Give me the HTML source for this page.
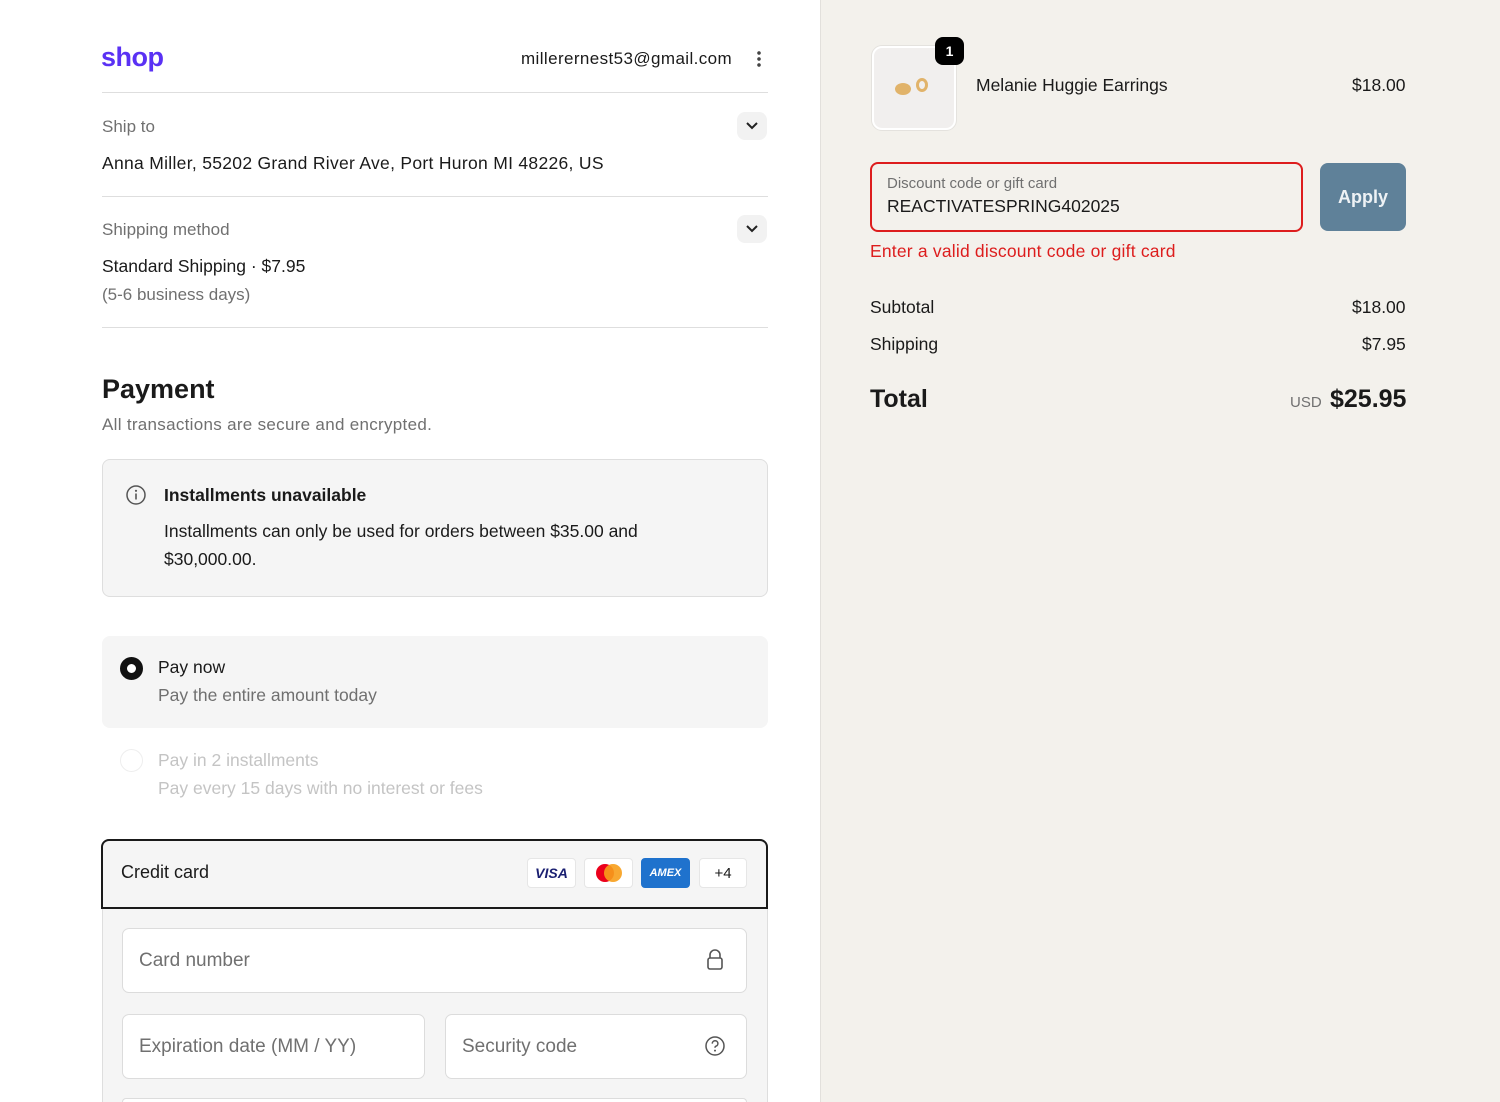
<!DOCTYPE html>
<html style="overflow:hidden;height:1102px"><head><meta charset="utf-8"><style>
*{box-sizing:border-box;margin:0;padding:0}
body{width:1500px;height:1102px;overflow:hidden;font-family:"Liberation Sans",sans-serif;color:#1a1a1a;background:#fff;position:relative}
.a{position:absolute}
.right{position:absolute;left:820px;top:0;width:680px;height:1102px;background:#f3f1ec;border-left:1px solid #e2e0dc}
.hr{position:absolute;left:102px;width:666px;height:1px;background:#dedede}
.g{color:#707070}
.chev{position:absolute;left:737px;width:30px;height:28px;border-radius:8px;background:#f2f2f2}
.box{position:absolute;border-radius:8px}
.inp{position:absolute;background:#fff;border:1px solid #dcdcdc;border-radius:7px;font-size:19px;color:#707070;padding-left:16px;display:flex;align-items:center}
.badge{position:absolute;top:858px;height:30px;border-radius:4px;background:#fff;border:1px solid #e6e6e6;display:flex;align-items:center;justify-content:center;font-size:13px;font-weight:bold}
</style></head><body>
<div class="a" style="left:101px;top:42px;font-size:27px;font-weight:bold;color:#5a31f4;letter-spacing:-0.5px">shop</div>
<div class="a" style="left:521px;top:49px;font-size:17px;letter-spacing:0.4px">millerernest53@gmail.com</div>
<div class="a" style="left:757px;top:50px;width:4px;height:18px;background:radial-gradient(circle,#444 1.6px,transparent 2px) 0 0/4px 6px repeat-y"></div>
<div class="hr" style="top:92px"></div>
<div class="a g" style="left:102px;top:117px;font-size:17px">Ship to</div>
<div class="chev" style="top:112px"><svg width="30" height="28"><path d="M10 11l5 5 5-5" stroke="#222" stroke-width="2" fill="none"/></svg></div>
<div class="a" style="left:102px;top:153px;font-size:17.5px;letter-spacing:0.3px">Anna Miller, 55202 Grand River Ave, Port Huron MI 48226, US</div>
<div class="hr" style="top:196px"></div>
<div class="a g" style="left:102px;top:220px;font-size:17px">Shipping method</div>
<div class="chev" style="top:215px"><svg width="30" height="28"><path d="M10 11l5 5 5-5" stroke="#222" stroke-width="2" fill="none"/></svg></div>
<div class="a" style="left:102px;top:256px;font-size:17.5px">Standard Shipping · $7.95</div>
<div class="a g" style="left:102px;top:285px;font-size:17px">(5-6 business days)</div>
<div class="hr" style="top:327px"></div>
<div class="a" style="left:102px;top:374px;font-size:27px;font-weight:bold">Payment</div>
<div class="a g" style="left:102px;top:415px;font-size:17px;letter-spacing:0.3px">All transactions are secure and encrypted.</div>
<div class="box" style="left:102px;top:459px;width:666px;height:138px;background:#f5f5f5;border:1px solid #dedede"></div>
<svg class="a" style="left:125px;top:484px" width="22" height="22"><circle cx="11" cy="11" r="9" stroke="#555" stroke-width="1.5" fill="none"/><path d="M11 9.5v6" stroke="#555" stroke-width="1.6"/><circle cx="11" cy="6.8" r="1.1" fill="#555"/></svg>
<div class="a" style="left:164px;top:485px;font-size:17.5px;font-weight:bold">Installments unavailable</div>
<div class="a" style="left:164px;top:517px;font-size:17.5px;line-height:28px;width:560px">Installments can only be used for orders between $35.00 and $30,000.00.</div>
<div class="box" style="left:102px;top:636px;width:666px;height:92px;background:#f5f5f5"></div>
<div class="a" style="left:120px;top:657px;width:23px;height:23px;border-radius:50%;border:7px solid #111;background:#fff"></div>
<div class="a" style="left:158px;top:657px;font-size:17.5px">Pay now</div>
<div class="a g" style="left:158px;top:685px;font-size:17.5px">Pay the entire amount today</div>
<div class="a" style="left:120px;top:749px;width:23px;height:23px;border-radius:50%;border:1px solid #eee"></div>
<div class="a" style="left:158px;top:750px;font-size:17.5px;color:#c4c4c4">Pay in 2 installments</div>
<div class="a" style="left:158px;top:778px;font-size:17.5px;color:#c4c4c4">Pay every 15 days with no interest or fees</div>
<div class="a" style="left:102px;top:908px;width:666px;height:194px;background:#f5f5f5;border:1px solid #dedede;border-top:none;border-bottom:none"></div>
<div class="box" style="left:101px;top:839px;width:667px;height:70px;background:#f5f5f5;border:2px solid #1a1a1a;border-radius:8px 8px 0 0"></div>
<div class="a" style="left:121px;top:862px;font-size:18px">Credit card</div>
<div class="badge" style="left:527px;width:49px;color:#1a1f71;font-style:italic;font-size:14px">VISA</div>
<div class="badge" style="left:584px;width:49px"><svg width="32" height="20"><circle cx="12" cy="10" r="9" fill="#eb001b"/><circle cx="20" cy="10" r="9" fill="#f79e1b" opacity=".9"/></svg></div>
<div class="badge" style="left:641px;width:49px;background:#1f72cd;border-color:#1f72cd;color:#fff;font-size:11px;font-style:italic">AMEX</div>
<div class="badge" style="left:699px;width:48px;font-weight:normal;font-size:15px">+4</div>
<div class="inp" style="left:122px;top:928px;width:625px;height:65px">Card number</div>
<svg class="a" style="left:705px;top:948px" width="20" height="24"><path d="M5 10V7a5 5 0 0 1 10 0v3" stroke="#555" stroke-width="1.6" fill="none"/><rect x="3" y="10" width="14" height="11" rx="2" stroke="#555" stroke-width="1.6" fill="none"/></svg>
<div class="inp" style="left:122px;top:1014px;width:303px;height:65px">Expiration date (MM / YY)</div>
<div class="inp" style="left:445px;top:1014px;width:302px;height:65px">Security code</div>
<svg class="a" style="left:704px;top:1035px" width="22" height="22"><circle cx="11" cy="11" r="9" stroke="#555" stroke-width="1.5" fill="none"/><path d="M8.3 8.6a2.8 2.8 0 1 1 3.6 2.6c-.7.3-.9.8-.9 1.6" stroke="#555" stroke-width="1.5" fill="none"/><circle cx="11" cy="15.6" r="1" fill="#555"/></svg>
<div class="inp" style="left:122px;top:1098px;width:625px;height:4px;border-bottom:none;border-radius:7px 7px 0 0"></div>

<div class="right"></div>
<div class="a" style="left:872px;top:46px;width:84px;height:84px;border-radius:10px;background:#f1efee;border:2px solid #fff;box-shadow:0 0 0 1px #e4e2de"></div>
<div class="a" style="left:895px;top:83px;width:16px;height:12px;border-radius:50%;background:#e1b36a"></div>
<div class="a" style="left:916px;top:78px;width:12px;height:14px;border-radius:50%;border:3px solid #e1b36a"></div>
<div class="a" style="left:935px;top:37px;width:29px;height:28px;border-radius:8px;background:#000;color:#fff;font-size:14px;font-weight:bold;display:flex;align-items:center;justify-content:center">1</div>
<div class="a" style="left:976px;top:75px;font-size:17.5px">Melanie Huggie Earrings</div>
<div class="a" style="left:1352px;top:75px;font-size:17.5px">$18.00</div>
<div class="a" style="left:870px;top:162px;width:433px;height:70px;border:2px solid #dd1d1d;border-radius:8px;background:#f3f1ec"></div>
<div class="a" style="left:887px;top:175px;font-size:15px;color:#707070">Discount code or gift card</div>
<div class="a" style="left:887px;top:196px;font-size:17.5px">REACTIVATESPRING402025</div>
<div class="a" style="left:1320px;top:163px;width:86px;height:68px;border-radius:8px;background:#5f8199;color:#eef2f5;font-size:18px;font-weight:bold;display:flex;align-items:center;justify-content:center">Apply</div>
<div class="a" style="left:870px;top:241px;font-size:17.5px;color:#dd1d1d;letter-spacing:0.2px">Enter a valid discount code or gift card</div>
<div class="a" style="left:870px;top:297px;font-size:17.5px">Subtotal</div>
<div class="a" style="left:1352px;top:297px;font-size:17.5px">$18.00</div>
<div class="a" style="left:870px;top:334px;font-size:17.5px">Shipping</div>
<div class="a" style="left:1362px;top:334px;font-size:17.5px">$7.95</div>
<div class="a" style="left:870px;top:385px;font-size:25px;font-weight:bold">Total</div>
<div class="a" style="left:1290px;top:394px;font-size:15px;color:#707070">USD</div>
<div class="a" style="left:1330px;top:385px;font-size:25px;font-weight:bold">$25.95</div>
</body></html>
